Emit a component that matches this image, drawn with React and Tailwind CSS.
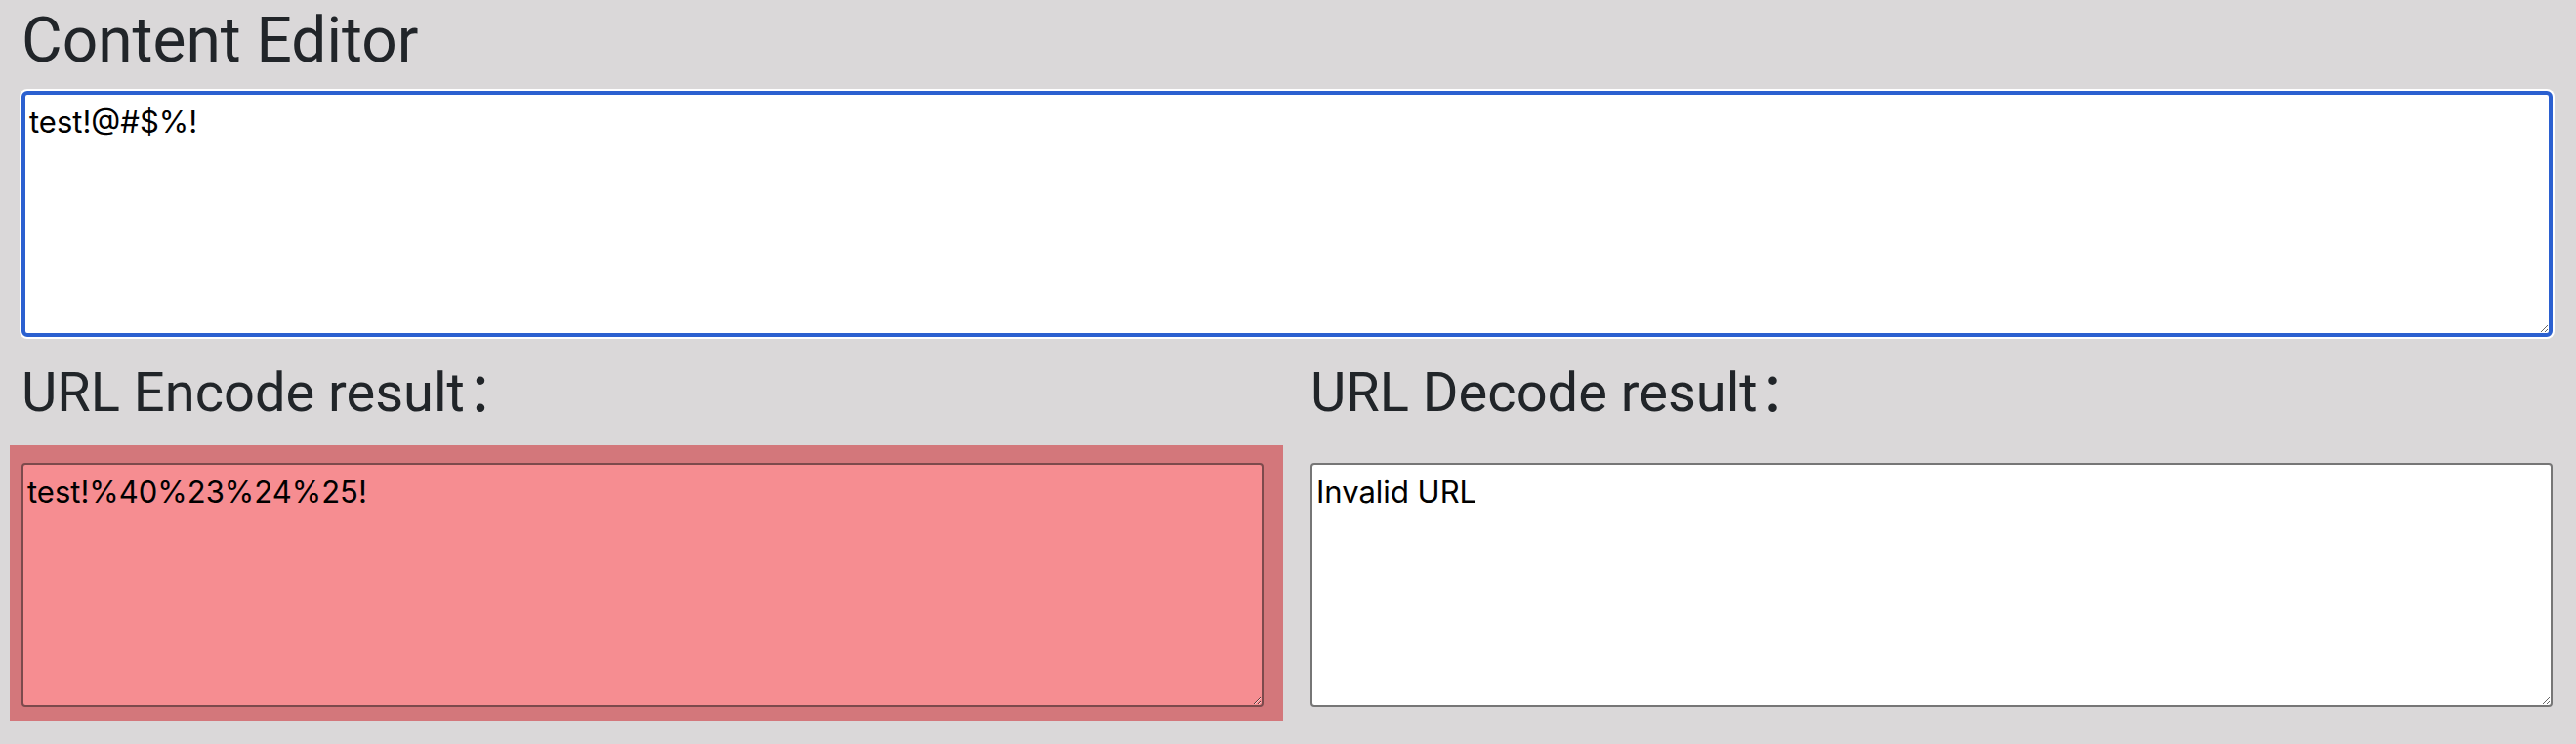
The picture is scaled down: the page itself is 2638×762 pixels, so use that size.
const HEAD_FONT = "font-['Roboto','Noto_Sans_CJK_SC',sans-serif]";
const TEXT_FONT = "font-['Inter','Roboto',sans-serif]";

function ResultBox({ value, className }) {
  return (
    <textarea
      readOnly
      value={value}
      className={`block h-[250px] w-full rounded-[4px] border-2 px-[4px] py-[4px] text-[31px] leading-[48px] text-black outline-none ${TEXT_FONT} ${className}`}
    />
  );
}

function ResultHeading({ children }) {
  return (
    <h2 className="text-[56px] leading-[1.2] font-normal text-[#212529]">
      {children}
      <span className="ml-[2px]">：</span>
    </h2>
  );
}

export default function App() {
  return (
    <div className={`min-h-screen bg-[#dad8d9] pl-[22px] pr-[24px] pt-[4px] ${HEAD_FONT}`}>
      <h1 className="text-[64px] leading-[1.2] font-normal text-[#212529]">Content Editor</h1>

      <textarea
        readOnly
        value="test!@#$%!"
        className={`mt-[12px] block h-[252px] w-full rounded-[6px] border-4 border-[#2b60d0] bg-white px-[4px] py-[4px] text-[31px] leading-[48px] text-black shadow-[0_0_0_2px_#ffffff] outline-none ${TEXT_FONT}`}
      />

      <div className="mt-[24px] grid grid-cols-2 gap-[48px]">
        <div>
          <ResultHeading>URL Encode result</ResultHeading>
          <div className="mt-[20px] -ml-[12px] -mr-[20px] bg-[#d3777b] pb-[14px] pl-[12px] pr-[20px] pt-[18px]">
            <ResultBox value="test!%40%23%24%25!" className="border-[#7c4a4c] bg-[#f68d91]" />
          </div>
        </div>
        <div>
          <ResultHeading>URL Decode result</ResultHeading>
          <div className="mt-[38px]">
            <ResultBox value="Invalid URL" className="border-[#767676] bg-white" />
          </div>
        </div>
      </div>
    </div>
  );
}
